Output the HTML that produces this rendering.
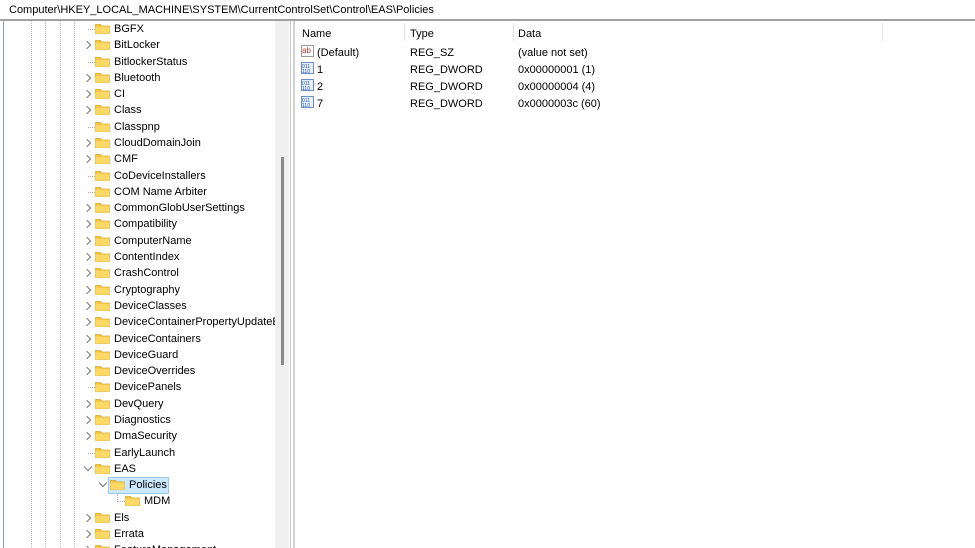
<!DOCTYPE html>
<html><head><style>
html,body{margin:0;width:975px;height:548px;overflow:hidden}
body{background:#fff;font-family:"Liberation Sans",sans-serif;font-size:11px;color:#000;position:relative}
.a{position:absolute;white-space:nowrap}
.f{position:absolute;width:15px;height:11px}
.ch{position:absolute;width:5px;height:5px;border-right:1px solid #777;border-bottom:1px solid #777}
.vd{position:absolute;top:21px;height:527px;border-left:1px dotted #bbb}
.hd{position:absolute;width:7px;border-top:1px dotted #aaa}
#tree{position:absolute;left:0;top:0;width:275px;height:548px;overflow:hidden}
</style></head><body>
<div class="a" style="left:0;top:0;width:975px;height:19px;background:#fff"></div>
<div class="a" style="left:9px;top:4px;font-size:11px">Computer\HKEY_LOCAL_MACHINE\SYSTEM\CurrentControlSet\Control\EAS\Policies</div>
<div class="a" style="left:0;top:19px;width:975px;height:2px;background:#a0a0a0"></div>
<div class="a" style="left:3px;top:21px;width:1px;height:527px;background:#8aa0b8"></div>
<div class="vd" style="left:31px"></div><div class="vd" style="left:45px"></div><div class="vd" style="left:60px"></div><div class="vd" style="left:74px"></div>
<div id="tree"></div>
<div class="a" style="left:275px;top:21px;width:14px;height:527px;background:#f0f0f0"></div>
<div class="a" style="left:281px;top:157px;width:3px;height:208px;background:#8a8a8a"></div>
<div class="a" style="left:290px;top:21px;width:1px;height:527px;background:#c8c8c8"></div>
<div class="a" style="left:293px;top:21px;width:2px;height:527px;background:#d0d0d0"></div>
<div class="a" style="left:404px;top:23px;width:1px;height:18px;background:#e5e5e5"></div>
<div class="a" style="left:513px;top:23px;width:1px;height:18px;background:#e5e5e5"></div>
<div class="a" style="left:882px;top:23px;width:1px;height:18px;background:#e5e5e5"></div>
<div class="a" style="left:302px;top:28px">Name</div>
<div class="a" style="left:410px;top:28px">Type</div>
<div class="a" style="left:518px;top:28px">Data</div>
<svg class="a" style="left:301px;top:45px" width="14" height="13"><rect x="0.5" y="0.5" width="12" height="11" fill="#fff" stroke="#999"/><text x="1" y="8" font-size="8" fill="#c0392b" font-family="Liberation Sans">ab</text></svg>
<div class="a" style="left:317px;top:47px">(Default)</div><div class="a" style="left:410px;top:47px">REG_SZ</div><div class="a" style="left:518px;top:47px">(value not set)</div>
<svg class="a" style="left:301px;top:62px" width="14" height="13"><rect x="0.5" y="0.5" width="12" height="11" fill="#e8f0fb" stroke="#6a8fc8"/><text x="1" y="6" font-size="5" fill="#2255aa">011</text><text x="1" y="11" font-size="5" fill="#2255aa">110</text></svg>
<div class="a" style="left:317px;top:64px">1</div><div class="a" style="left:410px;top:64px">REG_DWORD</div><div class="a" style="left:518px;top:64px">0x00000001 (1)</div>
<svg class="a" style="left:301px;top:79px" width="14" height="13"><rect x="0.5" y="0.5" width="12" height="11" fill="#e8f0fb" stroke="#6a8fc8"/><text x="1" y="6" font-size="5" fill="#2255aa">011</text><text x="1" y="11" font-size="5" fill="#2255aa">110</text></svg>
<div class="a" style="left:317px;top:81px">2</div><div class="a" style="left:410px;top:81px">REG_DWORD</div><div class="a" style="left:518px;top:81px">0x00000004 (4)</div>
<svg class="a" style="left:301px;top:96px" width="14" height="13"><rect x="0.5" y="0.5" width="12" height="11" fill="#e8f0fb" stroke="#6a8fc8"/><text x="1" y="6" font-size="5" fill="#2255aa">011</text><text x="1" y="11" font-size="5" fill="#2255aa">110</text></svg>
<div class="a" style="left:317px;top:98px">7</div><div class="a" style="left:410px;top:98px">REG_DWORD</div><div class="a" style="left:518px;top:98px">0x0000003c (60)</div>
<script>
var items=[["BGFX",0,0],["BitLocker",1,0],["BitlockerStatus",0,0],["Bluetooth",1,0],["CI",1,0],["Class",1,0],["Classpnp",0,0],["CloudDomainJoin",1,0],["CMF",1,0],["CoDeviceInstallers",0,0],["COM Name Arbiter",0,0],["CommonGlobUserSettings",1,0],["Compatibility",1,0],["ComputerName",1,0],["ContentIndex",1,0],["CrashControl",1,0],["Cryptography",1,0],["DeviceClasses",1,0],["DeviceContainerPropertyUpdateE",1,0],["DeviceContainers",1,0],["DeviceGuard",1,0],["DeviceOverrides",1,0],["DevicePanels",0,0],["DevQuery",1,0],["Diagnostics",1,0],["DmaSecurity",1,0],["EarlyLaunch",0,0],["EAS",2,0],["Policies",2,1],["MDM",0,2],["Els",1,0],["Errata",1,0],["FeatureManagement",1,0]];
var h="";
function fold(x,y){return '<svg class="f" style="left:'+x+'px;top:'+(y-6)+'px" viewBox="0 0 15 11"><path d="M0.5 1.5h5l1.5 1.5h7.5v7.5h-14z" fill="#f0c040" stroke="#dca82a" stroke-width="0.8"/><rect x="0.5" y="3.5" width="14" height="7" fill="#fcd867"/></svg>';}
items.forEach(function(it,i){var y=29+i*16.29,l=it[2],bx=95+l*15;
if(it[1]==1)h+='<div class="ch" style="left:'+(84+l*15)+'px;top:'+(y-3)+'px;transform:rotate(-45deg)"></div>';
else if(it[1]==2)h+='<div class="ch" style="left:'+(85+l*15)+'px;top:'+(y-5)+'px;transform:rotate(45deg)"></div>';
else h+='<div class="hd" style="left:'+(88+l*15)+'px;top:'+y+'px"></div>';
if(it[0]=="Policies")h+='<div class="a" style="left:108px;top:'+(y-8)+'px;width:59px;height:15px;border:1px solid #99c9ef;background:#cce8ff"></div>';
h+=fold(bx,y);h+='<div class="a" style="left:'+(bx+19)+'px;top:'+(y-6)+'px">'+it[0]+'</div>';});
h+='<div class="a" style="left:117px;top:'+(29+28*16.29+8)+'px;height:9px;border-left:1px dotted #aaa"></div>';
document.getElementById("tree").innerHTML=h;
</script>
</body></html>
